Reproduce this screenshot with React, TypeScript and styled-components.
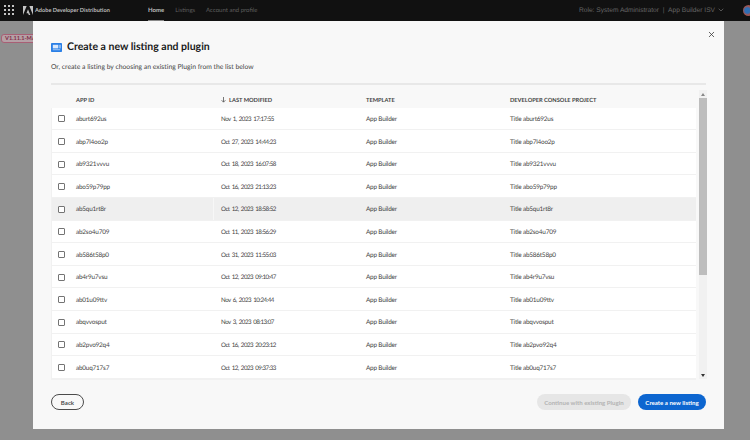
import { ChevronDown, X } from 'lucide-react'
import { FC } from 'react'
import styled, { createGlobalStyle } from 'styled-components'

const GlobalStyle = createGlobalStyle`
  html, body {
    margin: 0;
    padding: 0;
    width: 750px;
    height: 440px;
    overflow: hidden;
    background: #8f8f8f;
    font-family: Lato, 'Liberation Sans', sans-serif;
    text-rendering: geometricPrecision;
  }
`

const rows = [
  { id: 'aburt692us', date: 'Nov 1, 2023 17:17:55' },
  { id: 'abp7l4oo2p', date: 'Oct 27, 2023 14:44:23' },
  { id: 'ab9321vvvu', date: 'Oct 18, 2023 16:07:58' },
  { id: 'abo59p79pp', date: 'Oct 16, 2023 21:13:23' },
  { id: 'ab5qu1rt8r', date: 'Oct 12, 2023 18:58:52', hovered: true },
  { id: 'ab2so4u709', date: 'Oct 11, 2023 18:56:29' },
  { id: 'ab586t58p0', date: 'Oct 31, 2023 11:55:03' },
  { id: 'ab4r9u7vsu', date: 'Oct 12, 2023 09:10:47' },
  { id: 'ab01u09ttv', date: 'Nov 6, 2023 10:24:44' },
  { id: 'abqvvosput', date: 'Nov 3, 2023 08:13:07' },
  { id: 'ab2pvo92q4', date: 'Oct 16, 2023 20:23:12' },
  { id: 'ab0uq717s7', date: 'Oct 12, 2023 09:37:33' }
]

const App: FC = () => {
  return (
    <Page>
      <GlobalStyle />
      <TopBar>
        <GridIcon width="10" height="10" viewBox="0 0 10 10">
          {[1, 5, 9].map((y) => [1, 5, 9].map((x) => <rect key={`${x}-${y}`} x={x - 1} y={y - 1} width="2" height="2" fill="#c4c4c4" />))}
        </GridIcon>
        <AdobeLogo width="10" height="9" viewBox="0 0 30 27">
          <path d="M11 0H0v27zM19 0h11v27zM15 10l7 17h-4.6l-2-5h-5z" fill="#c4c4c4" />
        </AdobeLogo>
        <Brand>Adobe Developer Distribution</Brand>
        <NavItem $active>Home</NavItem>
        <NavItem>Listings</NavItem>
        <NavItem>Account and profile</NavItem>
        <RoleText>Role: System Administrator&nbsp;&nbsp;|&nbsp;&nbsp;App Builder ISV</RoleText>
        <ChevronDown size={8} color="#777" />
        <Globe />
      </TopBar>
      <Body>
        <VersionGutter>
          <VersionTag>V1.11.1-MAI</VersionTag>
        </VersionGutter>
        <Modal>
          <CloseButton>
            <X size={9} color="#333" strokeWidth={2} />
          </CloseButton>
          <TitleRow>
            <TitleIcon width="11" height="9" viewBox="0 0 12 10" preserveAspectRatio="none">
              <rect width="12" height="10" rx="0.8" fill="#2a7fe6" />
              <rect x="2" y="2" width="6" height="4" fill="#dbe9fb" />
              <rect x="9" y="2" width="1.6" height="4" fill="#a8ccf6" />
              <rect x="2" y="7" width="8" height="1" fill="#a8ccf6" />
            </TitleIcon>
            <Title>Create a new listing and plugin</Title>
          </TitleRow>
          <Subtitle>Or, create a listing by choosing an existing Plugin from the list below</Subtitle>
          <Divider />
          <TableArea>
            <Table>
              <HeaderRow>
                <span />
                <HeadCell>APP ID</HeadCell>
                <HeadCell>
                  <SortArrow width="5" height="6" viewBox="0 0 5 6">
                    <path d="M2.5 0v5M.6 3.2l1.9 2 1.9-2" fill="none" stroke="#555" strokeWidth="0.8" />
                  </SortArrow>
                  LAST MODIFIED
                </HeadCell>
                <HeadCell>TEMPLATE</HeadCell>
                <HeadCell>DEVELOPER CONSOLE PROJECT</HeadCell>
              </HeaderRow>
              <RowList>
                {rows.map((row) => (
                  <Row key={row.id} $hovered={row.hovered}>
                    <CheckCell>
                      <Checkbox />
                    </CheckCell>
                    <Cell>{row.id}</Cell>
                    <Cell $date>{row.date}</Cell>
                    <Cell>App Builder</Cell>
                    <Cell>Title {row.id}</Cell>
                  </Row>
                ))}
              </RowList>
            </Table>
            <Scrollbar>
              <ScrollArrow>
                <svg width="4" height="3" viewBox="0 0 4 3">
                  <path d="M2 0l2 3H0z" fill="#888" />
                </svg>
              </ScrollArrow>
              <ScrollThumb />
              <ScrollSpacer />
              <ScrollArrow>
                <svg width="4" height="3" viewBox="0 0 4 3">
                  <path d="M0 0h4L2 3z" fill="#333" />
                </svg>
              </ScrollArrow>
            </Scrollbar>
          </TableArea>
          <Footer>
            <BackButton>Back</BackButton>
            <FooterRight>
              <DisabledButton>Continue with existing Plugin</DisabledButton>
              <PrimaryButton>Create a new listing</PrimaryButton>
            </FooterRight>
          </Footer>
        </Modal>
      </Body>
    </Page>
  )
}

const Page = styled.div`
  width: 750px;
  height: 440px;
  display: flex;
  flex-direction: column;
  background: #8f8f8f;
`

const TopBar = styled.header`
  height: 21px;
  flex: none;
  box-sizing: border-box;
  display: flex;
  align-items: center;
  background: #111111;
  padding: 0 0 1px 4px;
`

const GridIcon = styled.svg`
  flex: none;
`

const AdobeLogo = styled.svg`
  flex: none;
  margin-left: 9px;
`

const Brand = styled.span`
  margin-left: 2px;
  padding-top: 1px;
  width: 113px;
  flex: none;
  font-size: 5.6px;
  font-weight: 700;
  color: #bdbdbd;
  white-space: nowrap;
`

const NavItem = styled.span<{ $active?: boolean }>`
  height: 21px;
  box-sizing: border-box;
  display: flex;
  align-items: center;
  padding-top: 2px;
  margin-right: 11px;
  font-size: 6px;
  font-weight: ${({ $active }) => ($active ? 700 : 400)};
  white-space: nowrap;
  color: ${({ $active }) => ($active ? '#bdbdbd' : '#5f5f5f')};
  border-bottom: 1px solid ${({ $active }) => ($active ? '#8a8a8a' : 'transparent')};
`

const RoleText = styled.span`
  margin-left: auto;
  margin-right: 2px;
  font-family: 'Liberation Sans', sans-serif;
  font-size: 6.65px;
  color: #666666;
  white-space: nowrap;
`

const Globe = styled.span`
  width: 11px;
  height: 11px;
  margin: 0 -4px 0 18px;
  flex: none;
  border-radius: 50%;
  background: radial-gradient(circle at 40% 50%, #2f6fb5 30%, #b5503f 55%, #2c5f9a 80%);
`

const Body = styled.div`
  flex: 1;
  display: flex;
  min-height: 0;
`

const VersionGutter = styled.div`
  width: 33px;
  flex: none;
  overflow: hidden;
  padding-top: 4px;
`

const VersionTag = styled.span`
  display: inline-block;
  box-sizing: border-box;
  height: 9px;
  line-height: 7px;
  padding: 0 3px;
  margin-left: 1px;
  border: 1px solid #a85f75;
  border-radius: 3px;
  background: #b5a0a6;
  color: #7f2a44;
  font-size: 5.6px;
  font-weight: 700;
  white-space: nowrap;
`

const Modal = styled.main`
  position: relative;
  width: 691px;
  height: 408px;
  flex: none;
  box-sizing: border-box;
  padding: 20px 18px 0 18px;
  background: #f8f8f8;
  display: flex;
  flex-direction: column;
`

const CloseButton = styled.span`
  position: absolute;
  top: 8.5px;
  right: 8px;
  display: flex;
`

const TitleRow = styled.div`
  display: flex;
  align-items: center;
  height: 14px;
  margin-top: -1px;
`

const TitleIcon = styled.svg`
  flex: none;
  margin-right: 5px;
`

const Title = styled.h1`
  margin: 0;
  font-size: 10.5px;
  font-weight: 700;
  color: #1a1a1a;
  white-space: nowrap;
`

const Subtitle = styled.p`
  margin: 8px 0 0;
  height: 10px;
  line-height: 10px;
  font-size: 6.8px;
  color: #444444;
  white-space: nowrap;
`

const Divider = styled.div`
  height: 2px;
  margin-top: 11px;
  width: 655px;
  background: #e8e8e8;
`

const TableArea = styled.div`
  display: flex;
  gap: 3px;
  margin-top: 5px;
  height: 296px;
`

const Table = styled.div`
  width: 645px;
  flex: none;
  display: flex;
  flex-direction: column;
`

const HeaderRow = styled.div`
  height: 17.7px;
  flex: none;
  display: grid;
  grid-template-columns: 25px 145px 145px 144px 1fr;
  align-items: center;
`

const HeadCell = styled.span`
  display: flex;
  align-items: center;
  padding-top: 3px;
  font-size: 5.7px;
  font-weight: 700;
  color: #444444;
  white-space: nowrap;
`

const SortArrow = styled.svg`
  margin-right: 3px;
`

const RowList = styled.div`
  display: grid;
  grid-auto-rows: 21.6px;
  row-gap: 1px;
  background: #f1f1f1;
  border-left: 1px solid #f1f1f1;
  padding-bottom: 2px;
`

const Row = styled.div<{ $hovered?: boolean }>`
  display: grid;
  grid-template-columns: 24px 145px 145px 144px 1fr;
  background: ${({ $hovered }) => ($hovered ? '#efefef' : '#ffffff')};

  ${({ $hovered }) =>
    $hovered &&
    `
    & > :nth-child(2) {
      width: 138px;
      box-sizing: border-box;
      border-right: 1px solid #f7f7f7;
    }
  `}
`

const CheckCell = styled.span`
  display: flex;
  align-items: center;
  padding: 1px 0 0 6px;
`

const Checkbox = styled.span`
  width: 7px;
  height: 7px;
  box-sizing: border-box;
  border: 1px solid #747474;
  border-radius: 1px;
  background: #fff;
`

const Cell = styled.span<{ $date?: boolean }>`
  display: flex;
  align-items: center;
  padding-top: 2px;
  font-size: ${({ $date }) => ($date ? '6.2px' : '6.4px')};
  letter-spacing: ${({ $date }) => ($date ? '-0.5px' : '-0.2px')};
  word-spacing: ${({ $date }) => ($date ? '1px' : '0')};
  color: #444444;
  white-space: pre;
`

const Scrollbar = styled.div`
  width: 8px;
  flex: none;
  display: flex;
  flex-direction: column;
  background: #f1f1f1;
  height: 289px;
`

const ScrollArrow = styled.span`
  height: 8px;
  flex: none;
  display: flex;
  align-items: center;
  justify-content: center;
`

const ScrollThumb = styled.div`
  height: 177px;
  flex: none;
  background: #bdbdbd;
`

const ScrollSpacer = styled.div`
  flex: 1;
`

const Footer = styled.footer`
  display: flex;
  align-items: center;
  justify-content: space-between;
  margin-top: 8px;
`

const FooterRight = styled.div`
  display: flex;
  gap: 7px;
`

const BackButton = styled.button`
  width: 33px;
  height: 16px;
  padding: 0;
  box-sizing: border-box;
  border: 1px solid #4b4b4b;
  border-radius: 8px;
  background: transparent;
  font-family: inherit;
  font-size: 6.1px;
  font-weight: 700;
  color: #4b4b4b;
`

const DisabledButton = styled.button`
  width: 94px;
  height: 16px;
  padding: 0;
  border: none;
  border-radius: 8px;
  background: #e6e6e6;
  font-family: inherit;
  font-size: 6.1px;
  font-weight: 700;
  color: #b3b3b3;
  white-space: nowrap;
`

const PrimaryButton = styled.button`
  width: 68px;
  height: 16px;
  padding: 0;
  border: none;
  border-radius: 8px;
  background: #0d66d0;
  font-family: inherit;
  font-size: 6.1px;
  font-weight: 700;
  color: #ffffff;
  white-space: nowrap;
`

export default App
